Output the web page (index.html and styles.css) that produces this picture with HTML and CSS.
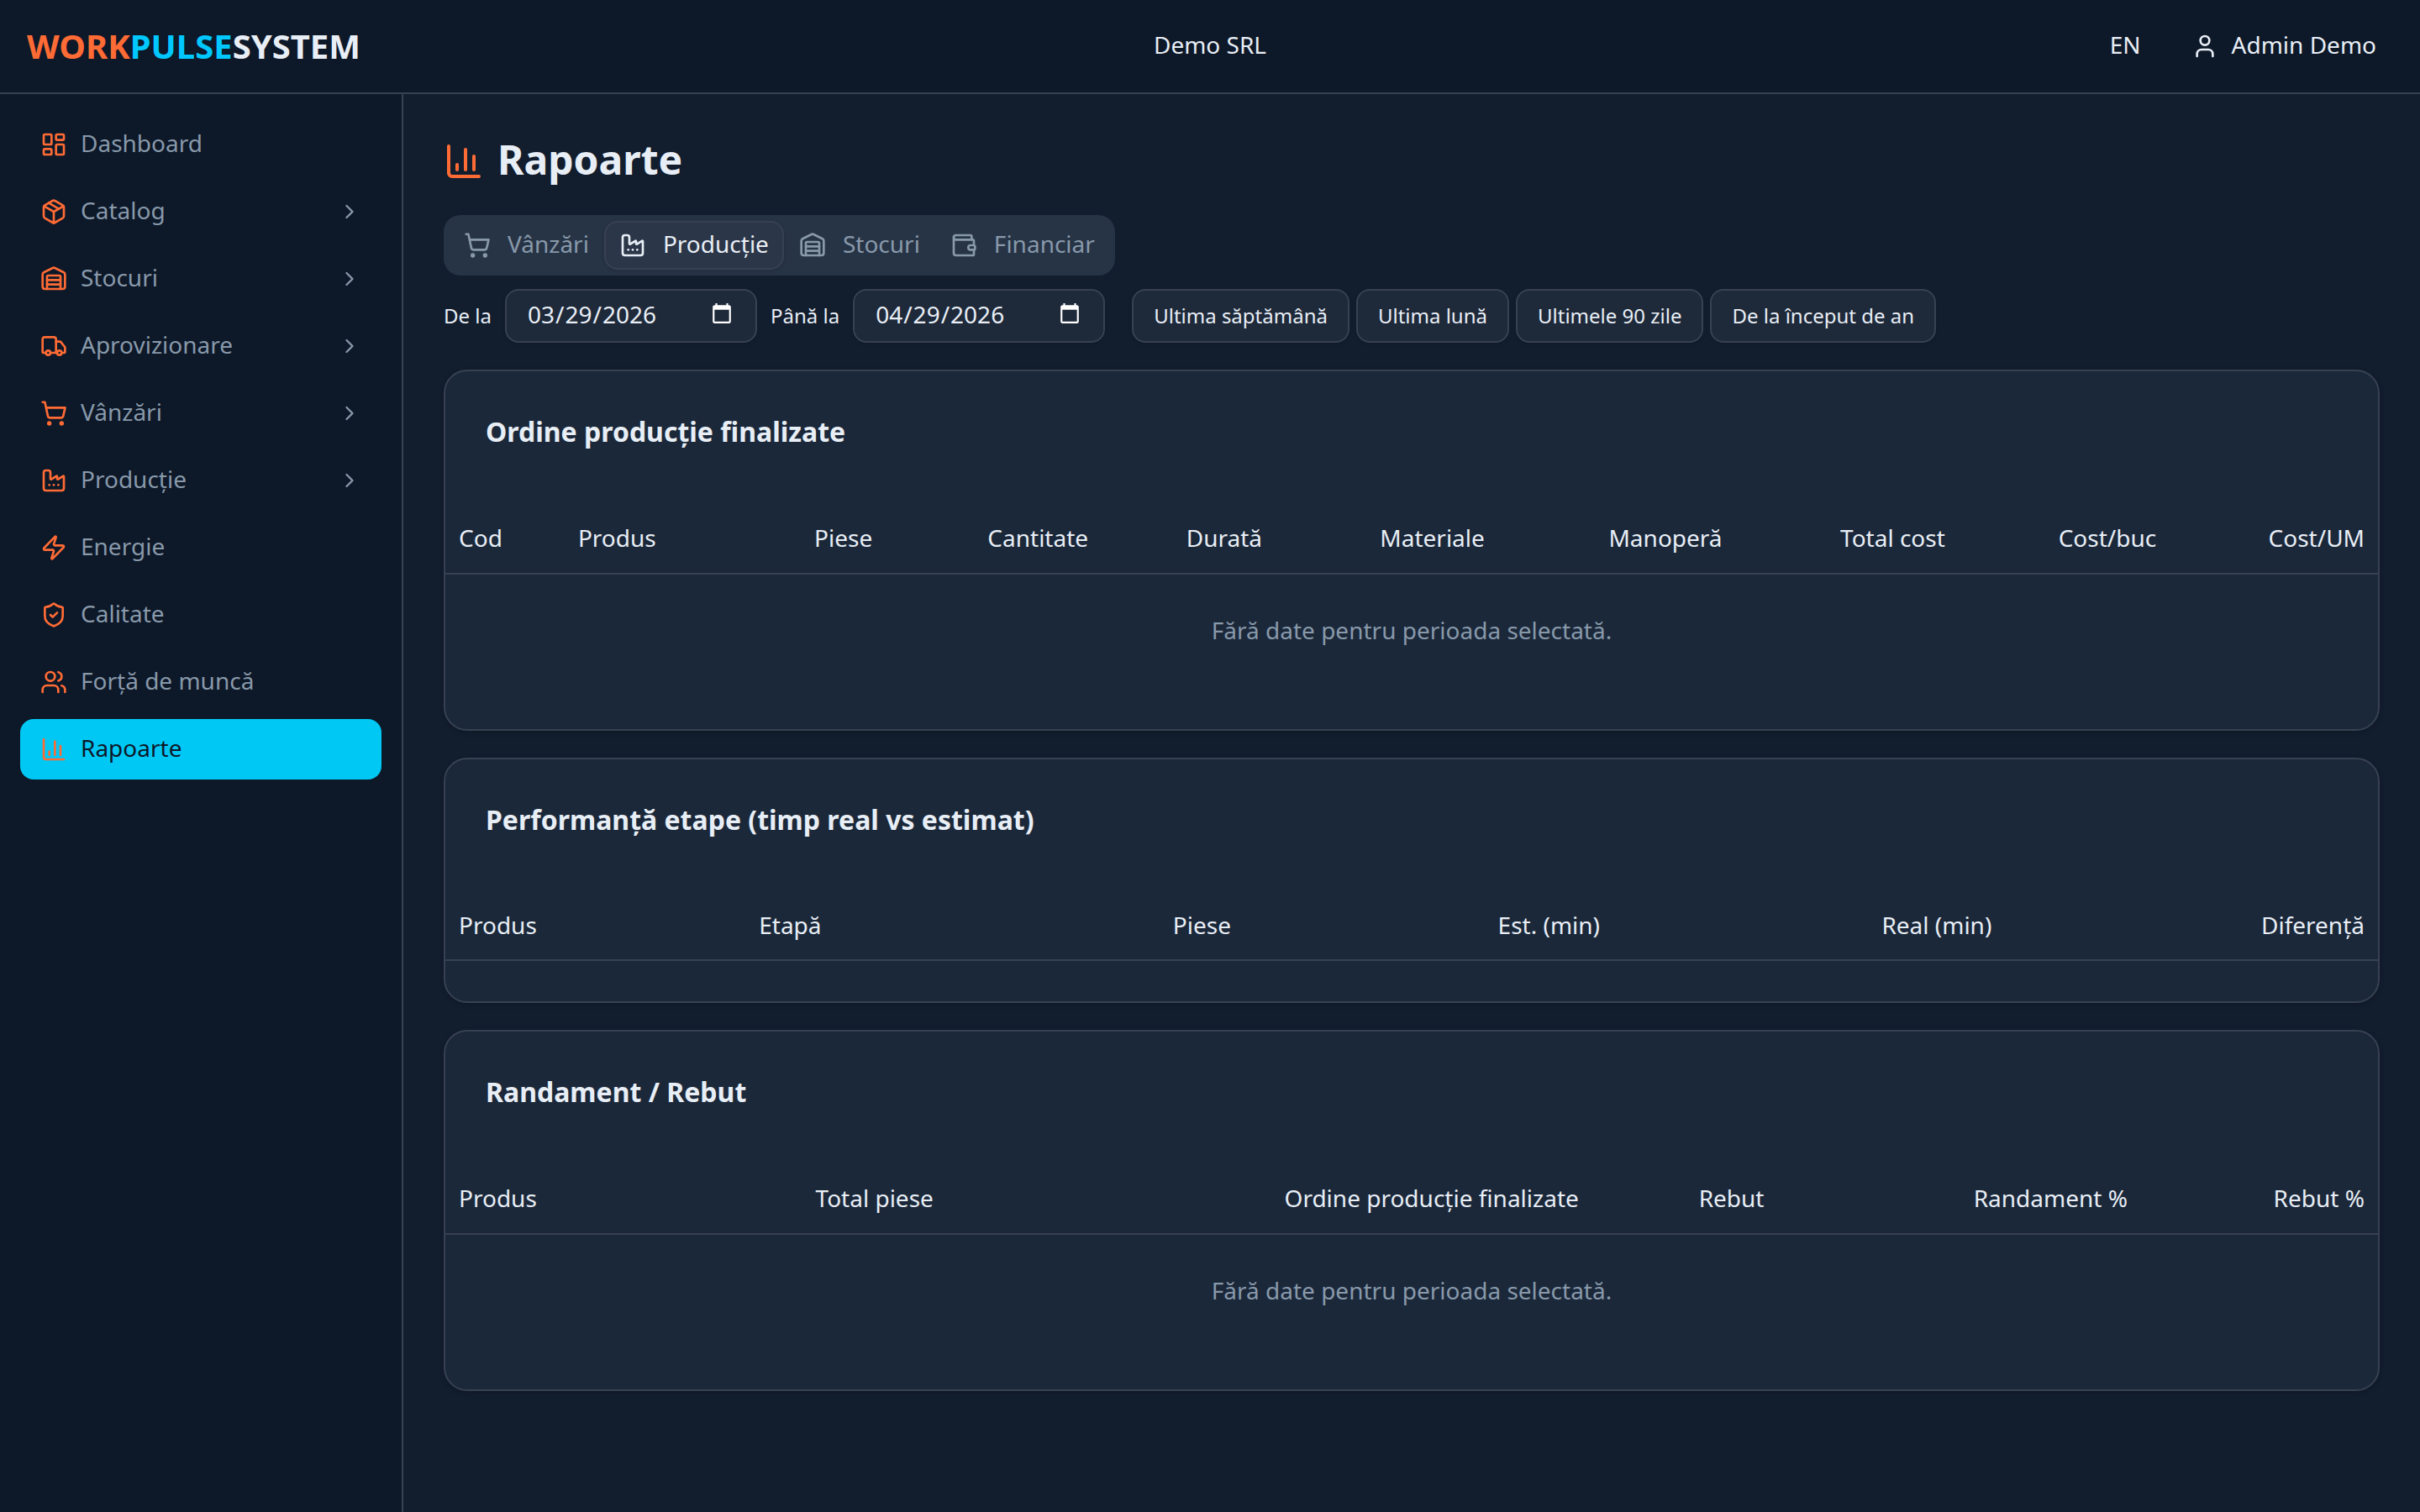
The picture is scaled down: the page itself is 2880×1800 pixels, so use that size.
FILE: index.html
```html
<!DOCTYPE html>
<html lang="ro">
<head>
    <meta charset="UTF-8">
    <title>Rapoarte - WorkPulseSystem</title>
    <link rel="stylesheet" href="styles.css">
</head>
<body>
    <!-- lucide icons -->
    <svg class="sprite" aria-hidden="true">
        <symbol id="i-dashboard" viewBox="0 0 24 24"><rect width="7" height="9" x="3" y="3" rx="1"/><rect width="7" height="5" x="14" y="3" rx="1"/><rect width="7" height="9" x="14" y="12" rx="1"/><rect width="7" height="5" x="3" y="16" rx="1"/></symbol>
        <symbol id="i-package" viewBox="0 0 24 24"><path d="M11 21.73a2 2 0 0 0 2 0l7-4A2 2 0 0 0 21 16V8a2 2 0 0 0-1-1.73l-7-4a2 2 0 0 0-2 0l-7 4A2 2 0 0 0 3 8v8a2 2 0 0 0 1 1.73z"/><path d="M12 22V12"/><path d="M3.29 7 12 12l8.71-5"/><path d="m7.5 4.27 9 5.15"/></symbol>
        <symbol id="i-warehouse" viewBox="0 0 24 24"><path d="M18 21V10a1 1 0 0 0-1-1H7a1 1 0 0 0-1 1v11"/><path d="M22 19a2 2 0 0 1-2 2H4a2 2 0 0 1-2-2V8a2 2 0 0 1 1.132-1.803l7.95-3.974a2 2 0 0 1 1.837 0l7.948 3.974A2 2 0 0 1 22 8z"/><path d="M6 13h12"/><path d="M6 17h12"/></symbol>
        <symbol id="i-truck" viewBox="0 0 24 24"><path d="M14 18V6a2 2 0 0 0-2-2H4a2 2 0 0 0-2 2v11a1 1 0 0 0 1 1h2"/><path d="M15 18H9"/><path d="M19 18h2a1 1 0 0 0 1-1v-3.65a1 1 0 0 0-.22-.624l-3.48-4.35A1 1 0 0 0 17.52 8H14"/><circle cx="17" cy="18" r="2"/><circle cx="7" cy="18" r="2"/></symbol>
        <symbol id="i-cart" viewBox="0 0 24 24"><circle cx="8" cy="21" r="1"/><circle cx="19" cy="21" r="1"/><path d="M2.05 2.05h2l2.66 12.42a2 2 0 0 0 2 1.58h9.78a2 2 0 0 0 1.95-1.57l1.65-7.43H5.12"/></symbol>
        <symbol id="i-factory" viewBox="0 0 24 24"><path d="M12 16h.01"/><path d="M16 16h.01"/><path d="M3 19a2 2 0 0 0 2 2h14a2 2 0 0 0 2-2V8.5a.5.5 0 0 0-.769-.422l-4.462 2.844A.5.5 0 0 1 15 10.5v-2a.5.5 0 0 0-.769-.422L9.77 10.922A.5.5 0 0 1 9 10.5V5a2 2 0 0 0-2-2H5a2 2 0 0 0-2 2z"/><path d="M8 16h.01"/></symbol>
        <symbol id="i-zap" viewBox="0 0 24 24"><path d="M4 14a1 1 0 0 1-.78-1.63l9.9-10.2a.5.5 0 0 1 .86.46l-1.92 6.02A1 1 0 0 0 13 10h7a1 1 0 0 1 .78 1.63l-9.9 10.2a.5.5 0 0 1-.86-.46l1.92-6.02A1 1 0 0 0 11 14z"/></symbol>
        <symbol id="i-shield" viewBox="0 0 24 24"><path d="M20 13c0 5-3.5 7.5-7.66 8.95a1 1 0 0 1-.67-.01C7.5 20.5 4 18 4 13V6a1 1 0 0 1 1-1c2 0 4.5-1.2 6.24-2.72a1.17 1.17 0 0 1 1.52 0C14.51 3.81 17 5 19 5a1 1 0 0 1 1 1z"/><path d="m9 12 2 2 4-4"/></symbol>
        <symbol id="i-users" viewBox="0 0 24 24"><path d="M16 21v-2a4 4 0 0 0-4-4H6a4 4 0 0 0-4 4v2"/><path d="M16 3.128a4 4 0 0 1 0 7.744"/><path d="M22 21v-2a4 4 0 0 0-3-3.87"/><circle cx="9" cy="7" r="4"/></symbol>
        <symbol id="i-chart" viewBox="0 0 24 24"><path d="M3 3v16a2 2 0 0 0 2 2h16"/><path d="M18 17V9"/><path d="M13 17V5"/><path d="M8 17v-3"/></symbol>
        <symbol id="i-wallet" viewBox="0 0 24 24"><path d="M19 7V4a1 1 0 0 0-1-1H5a2 2 0 0 0 0 4h15a1 1 0 0 1 1 1v4h-3a2 2 0 0 0 0 4h3a1 1 0 0 0 1-1v-2a1 1 0 0 0-1-1"/><path d="M3 5v14a2 2 0 0 0 2 2h15a1 1 0 0 0 1-1v-4"/></symbol>
        <symbol id="i-user" viewBox="0 0 24 24"><path d="M19 21v-2a4 4 0 0 0-4-4H9a4 4 0 0 0-4 4v2"/><circle cx="12" cy="7" r="4"/></symbol>
        <symbol id="i-chevron" viewBox="0 0 24 24"><path d="m9 18 6-6-6-6"/></symbol>
    </svg>

    <header class="topbar">
        <a href="#" class="logo"><span class="work">WORK</span><span class="pulse">PULSE</span>SYSTEM</a>
        <div class="company">Demo SRL</div>
        <div class="actions">
            <button type="button">EN</button>
            <button type="button"><svg class="icon"><use href="#i-user"/></svg>Admin Demo</button>
        </div>
    </header>

    <div class="layout">
        <nav class="sidebar">
            <a href="#"><svg class="icon"><use href="#i-dashboard"/></svg>Dashboard</a>
            <a href="#"><svg class="icon"><use href="#i-package"/></svg>Catalog<svg class="chevron"><use href="#i-chevron"/></svg></a>
            <a href="#"><svg class="icon"><use href="#i-warehouse"/></svg>Stocuri<svg class="chevron"><use href="#i-chevron"/></svg></a>
            <a href="#"><svg class="icon"><use href="#i-truck"/></svg>Aprovizionare<svg class="chevron"><use href="#i-chevron"/></svg></a>
            <a href="#"><svg class="icon"><use href="#i-cart"/></svg>Vânzări<svg class="chevron"><use href="#i-chevron"/></svg></a>
            <a href="#"><svg class="icon"><use href="#i-factory"/></svg>Producție<svg class="chevron"><use href="#i-chevron"/></svg></a>
            <a href="#"><svg class="icon"><use href="#i-zap"/></svg>Energie</a>
            <a href="#"><svg class="icon"><use href="#i-shield"/></svg>Calitate</a>
            <a href="#"><svg class="icon"><use href="#i-users"/></svg>Forță de muncă</a>
            <a href="#" class="active"><svg class="icon"><use href="#i-chart"/></svg>Rapoarte</a>
        </nav>

        <main class="content">
            <h1><svg class="icon"><use href="#i-chart"/></svg>Rapoarte</h1>

            <div class="tabs" role="tablist">
                <button type="button" role="tab"><svg class="icon"><use href="#i-cart"/></svg>Vânzări</button>
                <button type="button" role="tab" class="active" aria-selected="true"><svg class="icon"><use href="#i-factory"/></svg>Producție</button>
                <button type="button" role="tab"><svg class="icon"><use href="#i-warehouse"/></svg>Stocuri</button>
                <button type="button" role="tab"><svg class="icon"><use href="#i-wallet"/></svg>Financiar</button>
            </div>

            <div class="filters">
                <label for="from">De la</label>
                <input type="date" id="from" value="2026-03-29">
                <label for="to">Până la</label>
                <input type="date" id="to" value="2026-04-29">
                <div class="presets">
                    <button type="button">Ultima săptămână</button>
                    <button type="button">Ultima lună</button>
                    <button type="button">Ultimele 90 zile</button>
                    <button type="button">De la început de an</button>
                </div>
            </div>

            <section class="card">
                <h2>Ordine producție finalizate</h2>
                <table>
                    <thead>
                        <tr>
                            <th>Cod</th>
                            <th>Produs</th>
                            <th class="num">Piese</th>
                            <th class="num">Cantitate</th>
                            <th class="num">Durată</th>
                            <th class="num">Materiale</th>
                            <th class="num">Manoperă</th>
                            <th class="num">Total cost</th>
                            <th class="num">Cost/buc</th>
                            <th class="num">Cost/UM</th>
                        </tr>
                    </thead>
                    <tbody>
                        <tr><td class="empty" colspan="10">Fără date pentru perioada selectată.</td></tr>
                    </tbody>
                </table>
            </section>

            <section class="card">
                <h2>Performanță etape (timp real vs estimat)</h2>
                <table>
                    <thead>
                        <tr>
                            <th>Produs</th>
                            <th>Etapă</th>
                            <th class="num">Piese</th>
                            <th class="num">Est. (min)</th>
                            <th class="num">Real (min)</th>
                            <th class="num">Diferență</th>
                        </tr>
                    </thead>
                </table>
            </section>

            <section class="card">
                <h2>Randament / Rebut</h2>
                <table>
                    <thead>
                        <tr>
                            <th>Produs</th>
                            <th class="num">Total piese</th>
                            <th class="num">Ordine producție finalizate</th>
                            <th class="num">Rebut</th>
                            <th class="num">Randament %</th>
                            <th class="num">Rebut %</th>
                        </tr>
                    </thead>
                    <tbody>
                        <tr><td class="empty" colspan="6">Fără date pentru perioada selectată.</td></tr>
                    </tbody>
                </table>
            </section>
        </main>
    </div>
</body>
</html>
```
FILE: styles.css
```css
*{box-sizing: border-box;}
body,h1,h2{margin:0;}
html{
    color-scheme: dark;
}
body{
    display: flex;
    flex-direction: column;
    min-height: 100vh;
    background: #121d2e;
    color: #e8eef5;
    font-family: "Noto Sans", sans-serif;
    font-size: 28px;
    line-height: 40px;
}
a{
    color: inherit;
    text-decoration: none;
}
button,input{
    font: inherit;
    color: inherit;
    cursor: pointer;
}
button{
    padding: 0;
    border: none;
    background: none;
}
svg{
    fill: none;
    stroke: currentColor;
    stroke-width: 2;
    stroke-linecap: round;
    stroke-linejoin: round;
}
.sprite{
    display: none;
}
/* icons sit a little lower than the label next to them */
.icon,.chevron{
    flex: none;
    width: 32px;
    height: 32px;
    margin-top: 4px;
}

/* topbar */
.topbar{
    display: grid;
    grid-template-columns: 1fr auto 1fr;
    align-items: center;
    height: 112px;
    padding: 0 32px;
    border-bottom: 2px solid #374151;
    background: #0d1828;
}
.logo{
    font-size: 40px;
    font-weight: 700;
}
.logo .work{
    color: #ff6b35;
}
.logo .pulse{
    color: #00c8ff;
}
.company{
    padding-bottom: 4px;
}
.actions{
    display: flex;
    justify-content: flex-end;
    gap: 20px;
}
.actions button{
    display: flex;
    align-items: center;
    gap: 16px;
    padding: 0 20px 4px;
}

/* sidebar */
.layout{
    display: flex;
    flex: 1;
}
.sidebar{
    display: flex;
    flex-direction: column;
    flex: none;
    gap: 8px;
    width: 480px;
    padding: 24px;
    border-right: 2px solid #374151;
    background: #0d1828;
}
.sidebar a{
    display: flex;
    align-items: center;
    gap: 16px;
    height: 72px;
    padding: 0 24px 4px;
    border-radius: 16px;
    color: #8899aa;
}
.sidebar .icon{
    color: #ff6b35;
}
.sidebar .chevron{
    width: 28px;
    height: 28px;
    margin-left: auto;
}
.sidebar a.active{
    background: #00c8f5;
    color: #0d1828;
}

/* content */
.content{
    flex: 1;
    min-width: 0;
    padding: 48px;
}
h1{
    display: flex;
    align-items: center;
    gap: 16px;
    padding-bottom: 4px;
    margin-bottom: 28px;
    font-size: 48px;
    line-height: 60px;
}
h1 .icon{
    width: 48px;
    height: 48px;
    color: #ff6b35;
}
.tabs{
    display: flex;
    align-items: center;
    width: fit-content;
    height: 72px;
    padding: 6px;
    margin-top: 32px;
    border-radius: 20px;
    background: #273446;
    color: #8899aa;
}
.tabs button{
    display: flex;
    align-items: center;
    gap: 20px;
    height: 58px;
    padding: 0 16px 4px;
    border: 2px solid transparent;
    border-radius: 16px;
}
.tabs button.active{
    border-color: #374151;
    background: #2b3648;
    color: #e8eef5;
    box-shadow: 0 2px 4px rgba(0,0,0,.1);
}
.filters{
    display: flex;
    align-items: center;
    gap: 16px;
    margin: 16px 0 32px;
    font-size: 24px;
}
.filters input{
    width: 300px;
    height: 64px;
    padding: 0 24px 4px;
    border: 2px solid #374151;
    border-radius: 16px;
    background: #1e293a;
    font-size: 28px;
    box-shadow: 0 2px 4px rgba(0,0,0,.1);
}
.presets{
    display: flex;
    gap: 8px;
    margin-left: 16px;
}
.presets button{
    height: 64px;
    padding: 0 24px;
    border: 2px solid #374151;
    border-radius: 16px;
    background: #1e293a;
    box-shadow: 0 2px 4px rgba(0,0,0,.1);
}

/* cards */
.card{
    margin-bottom: 32px;
    padding: 48px 0;
    border: 2px solid #374151;
    border-radius: 28px;
    background: #1b283a;
    box-shadow: 0 2px 6px rgba(0,0,0,.2);
}
.card h2{
    padding: 0 48px;
    margin-bottom: 64px;
    font-size: 32px;
    font-weight: 700;
    line-height: 48px;
}
table{
    width: 100%;
    border-spacing: 0;
}
th{
    height: 82px;
    padding: 0 16px 4px;
    border-bottom: 2px solid #374151;
    font-weight: 400;
    text-align: left;
    white-space: nowrap;
}
thead:last-child th{
    height: 80px;
}
th.num{
    text-align: right;
}
td.empty{
    padding: 46px 16px 50px;
    color: #8899aa;
    text-align: center;
}
```
